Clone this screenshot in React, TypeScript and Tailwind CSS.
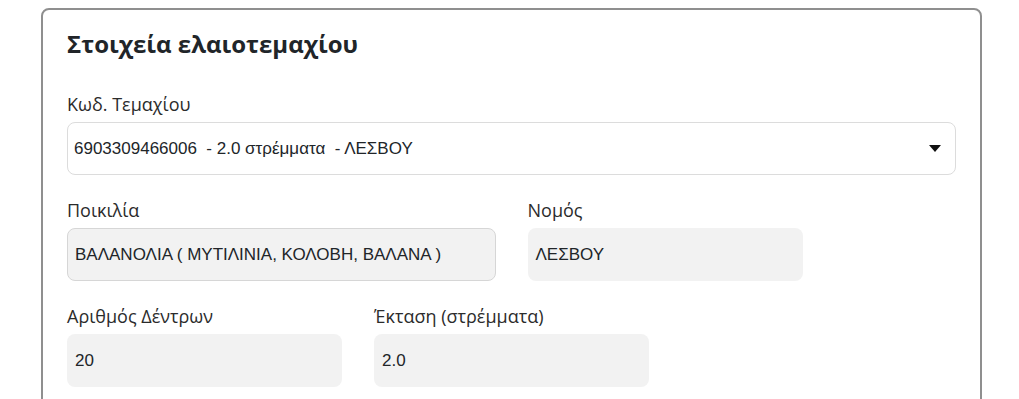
import React from "react";

const label = "block text-[18px] leading-6 text-[#2b2b2b] mb-1.5";
const field =
  "h-[53px] w-full rounded-lg bg-[#f2f2f2] px-2 flex items-center text-[17px] text-[#212529]";
const arial = { fontFamily: '"Liberation Sans", Arial, sans-serif' };

export default function App() {
  return (
    <main
      className="w-[1019px] h-[399px] overflow-hidden bg-white pt-2 pl-[41px]"
      style={{ fontFamily: '"Open Sans", "Noto Sans", sans-serif' }}
    >
      <div className="w-[941px] h-[500px] rounded-lg border-2 border-[#8f8f8f] pt-[16px] px-6">
        <h1 className="text-[24px] leading-9 font-bold text-[#212529] mb-[30px]">
          Στοιχεία ελαιοτεμαχίου
        </h1>
        <div className="grid grid-cols-12 gap-x-8 gap-y-[23px]">
          <div className="col-span-12">
            <label className={label}>Κωδ. Τεμαχίου</label>
            <div
              className="h-[53px] w-full rounded-lg border border-[#dcdcdc] bg-white pl-[6px] pr-[14px] flex items-center justify-between text-[17px] text-[#212529]"
              style={arial}
            >
              <span className="whitespace-pre">
                6903309466006  - 2.0 στρέμματα  - ΛΕΣΒΟΥ
              </span>
              <svg width="12" height="7" viewBox="0 0 12 7">
                <path d="M0 0 L12 0 L6 7 Z" fill="#111" />
              </svg>
            </div>
          </div>
          <div className="col-span-6">
            <label className={label}>Ποικιλία</label>
            <div
              className={`${field} border border-[#d6d6d6] !px-[7px]`}
              style={arial}
            >
              ΒΑΛΑΝΟΛΙΑ ( ΜΥΤΙΛΙΝΙΑ, ΚΟΛΟΒΗ, ΒΑΛΑΝΑ )
            </div>
          </div>
          <div className="col-span-4">
            <label className={label}>Νομός</label>
            <div className={field} style={arial}>
              ΛΕΣΒΟΥ
            </div>
          </div>
          <div className="col-span-2" />
          <div className="col-span-4">
            <label className={label}>Αριθμός Δέντρων</label>
            <div className={field} style={arial}>
              20
            </div>
          </div>
          <div className="col-span-4">
            <label className={label}>Έκταση (στρέμματα)</label>
            <div className={field} style={arial}>
              2.0
            </div>
          </div>
        </div>
      </div>
    </main>
  );
}
